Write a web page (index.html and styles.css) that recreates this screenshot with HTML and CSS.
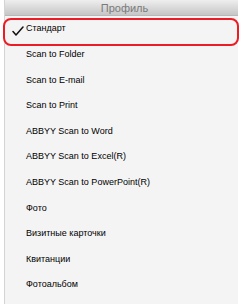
FILE: index.html
```html
<!DOCTYPE html>
<html lang="ru">
<head>
    <meta charset="UTF-8">
    <title>Профиль</title>
    <link rel="stylesheet" href="styles.css">
</head>
<body>
    <div class="panel">
        <div class="head">Профиль</div>
        <ul class="list">
            <li class="current">
                <svg class="check" width="12" height="10" viewBox="0 0 12 10"><path d="M1 5.5 L4 9 L11 1" fill="none" stroke="#111" stroke-width="1.5" stroke-linecap="round" stroke-linejoin="round"/></svg>
                Стандарт
            </li>
            <li>Scan to Folder</li>
            <li>Scan to E-mail</li>
            <li>Scan to Print</li>
            <li>ABBYY Scan to Word</li>
            <li>ABBYY Scan to Excel(R)</li>
            <li>ABBYY Scan to PowerPoint(R)</li>
            <li>Фото</li>
            <li>Визитные карточки</li>
            <li>Квитанции</li>
            <li>Фотоальбом</li>
        </ul>
    </div>
</body>
</html>
```
FILE: styles.css
```css
*{
    margin: 0;
    padding: 0;
    list-style: none;
    box-sizing: border-box;
}
body{
    background-color: #ffffff;
    font-family: "Liberation Sans", Arial, sans-serif;
    width: 242px;
    height: 304px;
    overflow: hidden;
}
.panel{
    margin-left: 4px;
    margin-right: 4px;
    height: 304px;
    background-color: #f4f4f4;
    border-left: 1px solid #d4d4d4;
}
.head{
    height: 16px;
    line-height: 16px;
    text-align: center;
    font-size: 11px;
    color: #7a7a7a;
    background: linear-gradient(#eeeeee, #c6c6c6);
    border-bottom: 1px solid #b8b8b8;
    padding-left: 6px;
}
.list li{
    height: 25.6px;
    line-height: 25.6px;
    font-size: 9px;
    color: #000000;
    padding-left: 21px;
    position: relative;
}
.list li.current{
    height: 26px;
}
.list li.current::after{
    content: "";
    position: absolute;
    left: -2px;
    right: -1px;
    top: 2px;
    bottom: -4px;
    border: 2px solid #ec1c24;
    border-radius: 8px;
}
.check{
    position: absolute;
    left: 7px;
    top: 10px;
}
```
